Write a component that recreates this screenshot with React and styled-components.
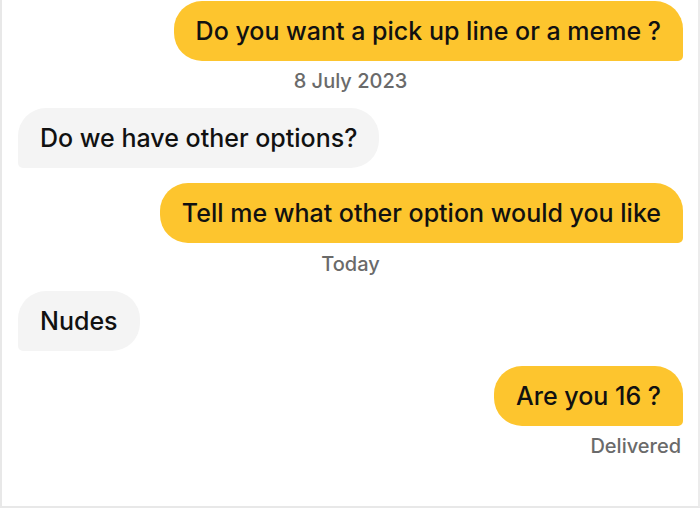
import React from "react";
import styled, { createGlobalStyle } from "styled-components";

const GlobalStyle = createGlobalStyle`
  html, body {
    margin: 0;
    padding: 0;
    background: #ffffff;
  }
  body {
    font-family: Inter, "Noto Sans", sans-serif;
  }
`;

const Thread = styled.div`
  box-sizing: border-box;
  width: 700px;
  height: 508px;
  padding: 1px 15px 0 16px;
  border-left: 2px solid #e8e8e8;
  border-right: 2px solid #ececec;
  border-bottom: 2px solid #e8e8e8;
  display: flex;
  flex-direction: column;
  overflow: hidden;
`;

const Row = styled.div`
  display: flex;
  justify-content: ${(props) => (props.mine ? "flex-end" : "flex-start")};
  margin-top: ${(props) => props.gap || 0}px;
`;

const Bubble = styled.div`
  box-sizing: border-box;
  height: 60px;
  display: flex;
  align-items: center;
  padding: 0 22px;
  font-size: 25px;
  font-weight: 500;
  color: #111111;
  background: ${(props) => (props.mine ? "#fdc52e" : "#f4f4f4")};
  border-radius: ${(props) =>
    props.mine ? "28px 28px 5px 28px" : "28px 28px 28px 5px"};
`;

const Stamp = styled.div`
  font-size: 20px;
  font-weight: 500;
  color: #6a6a6a;
  line-height: 24px;
  margin-top: ${(props) => props.gap || 0}px;
  text-align: ${(props) => props.align || "center"};
  padding-right: ${(props) => (props.align === "right" ? 2 : 0)}px;
`;

const messages = [
  { mine: true, text: "Do you want a pick up line or a meme ?" },
  { stamp: "8 July 2023", gap: 8 },
  { mine: false, text: "Do we have other options?", gap: 15 },
  { mine: true, text: "Tell me what other option would you like", gap: 15 },
  { stamp: "Today", gap: 9 },
  { mine: false, text: "Nudes", gap: 15 },
  { mine: true, text: "Are you 16 ?", gap: 15 },
  { stamp: "Delivered", gap: 8, align: "right" },
];

const App = () => (
  <>
    <GlobalStyle />
    <Thread>
      {messages.map((m, i) =>
        m.stamp ? (
          <Stamp key={i} gap={m.gap} align={m.align}>
            {m.stamp}
          </Stamp>
        ) : (
          <Row key={i} mine={m.mine} gap={m.gap}>
            <Bubble mine={m.mine}>{m.text}</Bubble>
          </Row>
        )
      )}
    </Thread>
  </>
);

export default App;
